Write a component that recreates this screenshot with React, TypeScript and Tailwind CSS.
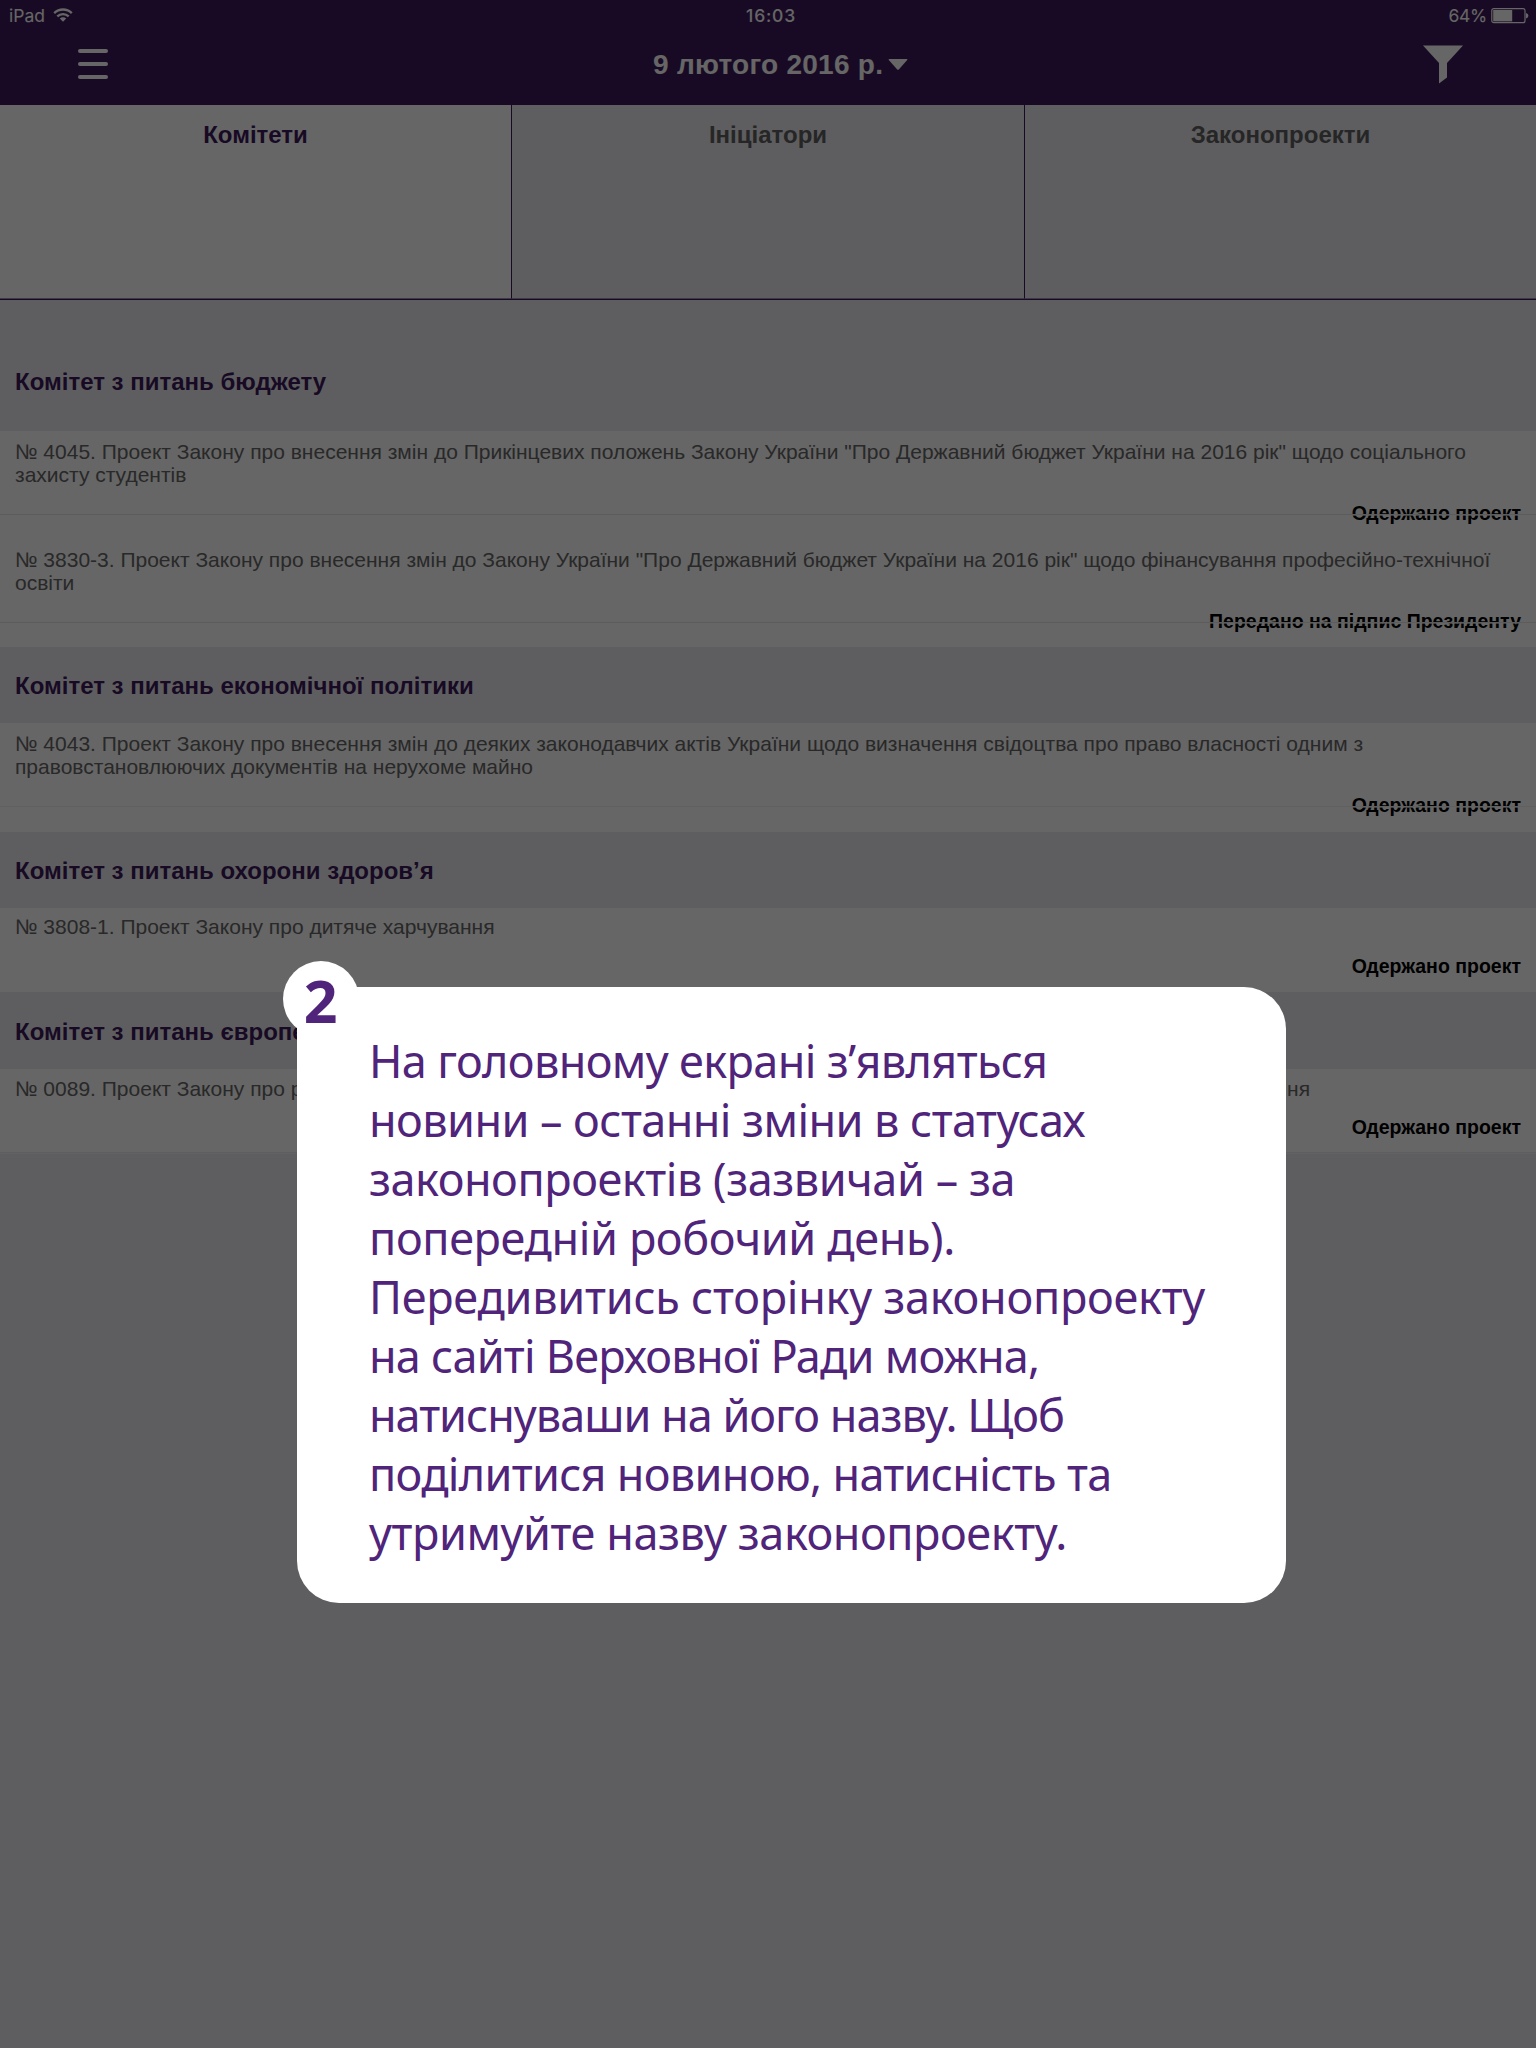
type Bill = {
  lines: string[];
  status: string;
  box: string;
  gap: string;
  divider?: string;
};

type Committee = { name: string; box: string; bills: Bill[] };

const committees: Committee[] = [
  {
    name: "Комітет з питань бюджету",
    box: "h-[131px] pt-[68px]",
    bills: [
      {
        lines: [
          '№ 4045. Проект Закону про внесення змін до Прикінцевих положень Закону України "Про Державний бюджет України на 2016 рік" щодо соціального',
          "захисту студентів",
        ],
        status: "Одержано проект",
        box: "h-[108px] pt-[9px]",
        gap: "mt-4",
        divider: "bg-[#e6e6e8]",
      },
      {
        lines: [
          '№ 3830-3. Проект Закону про внесення змін до Закону України "Про Державний бюджет України на 2016 рік" щодо фінансування професійно-технічної',
          "освіти",
        ],
        status: "Передано на підпис Президенту",
        box: "h-[108px] pt-[9px]",
        gap: "mt-4",
        divider: "bg-[#e6e6e8]",
      },
    ],
  },
  {
    name: "Комітет з питань економічної політики",
    box: "h-[76px] pt-[25px]",
    bills: [
      {
        lines: [
          "№ 4043. Проект Закону про внесення змін до деяких законодавчих актів України щодо визначення свідоцтва про право власності одним з",
          "правовстановлюючих документів на нерухоме майно",
        ],
        status: "Одержано проект",
        box: "h-[109px] pt-[9px]",
        gap: "mt-4",
        divider: "bg-[#efeff1]",
      },
    ],
  },
  {
    name: "Комітет з питань охорони здоров’я",
    box: "h-[76px] pt-[25px]",
    bills: [
      {
        lines: ["№ 3808-1. Проект Закону про дитяче харчування"],
        status: "Одержано проект",
        box: "h-[84px] pt-[7px]",
        gap: "mt-[17px]",
      },
    ],
  },
  {
    name: "Комітет з питань європейської інтеграції",
    box: "h-[77px] pt-[26px]",
    bills: [
      {
        lines: ["№ 0089. Проект Закону про ратифікацію", "фінансування"],
        status: "Одержано проект",
        box: "h-[83px] pt-2",
        gap: "mt-4",
      },
    ],
  },
];

const hint = [
  { text: "На головному екрані з’являться", tracking: "tracking-[-0.62px]" },
  { text: "новини – останні зміни в статусах", tracking: "tracking-[-0.56px]" },
  { text: "законопроектів (зазвичай – за", tracking: "tracking-[-0.44px]" },
  { text: "попередній робочий день).", tracking: "tracking-[-0.37px]" },
  { text: "Передивитись сторінку законопроекту", tracking: "tracking-[-0.25px]" },
  { text: "на сайті Верховної Ради можна,", tracking: "tracking-[-0.77px]" },
  { text: "натиснуваши на його назву. Щоб", tracking: "tracking-[-1px]" },
  { text: "поділитися новиною, натисність та", tracking: "tracking-[-0.67px]" },
  { text: "утримуйте назву законопроекту.", tracking: "tracking-[-0.43px]" },
];

function StatusBar() {
  return (
    <div className="grid h-8 grid-cols-3 items-start pt-[5px] font-[Inter] text-[17.5px] leading-[21px]">
      <div className="flex pl-[9px]">
        <span>iPad</span>
        <svg className="mt-[2px] ml-2" width="20" height="16" viewBox="0 0 20 16" fill="none" stroke="currentColor" strokeWidth="2.3">
          <path d="M1.2 6.1a12.6 12.6 0 0 1 17.6 0" />
          <path d="M4.3 9.4a8.1 8.1 0 0 1 11.4 0" />
          <path d="M10 14.8l-3.2-3.2a4.6 4.6 0 0 1 6.4 0z" fill="currentColor" stroke="none" />
        </svg>
      </div>
      <div className="pl-1.5 text-center font-medium tracking-[0.8px]">16:03</div>
      <div className="flex justify-end pr-[7px]">
        <span className="tracking-[-0.3px]">64%</span>
        <svg className="mt-[2px] ml-1" width="38" height="17" viewBox="0 0 38 17">
          <rect x="0.8" y="1.7" width="33.2" height="14" rx="2" fill="none" stroke="currentColor" strokeWidth="1.2" />
          <rect x="2.2" y="3" width="19" height="11.4" fill="currentColor" />
          <path d="M35 6q2.4.6 2.4 2.7T35 11.4z" fill="currentColor" />
        </svg>
      </div>
    </div>
  );
}

function Header() {
  return (
    <header className="h-[105px] bg-[#3e1b5a] text-white">
      <StatusBar />
      <div className="grid grid-cols-3">
        <div className="pt-[17px] pl-[78px]">
          <div className="flex w-[30px] flex-col gap-[9px]">
            <span className="h-1 rounded-full bg-white" />
            <span className="h-1 rounded-full bg-white" />
            <span className="h-1 rounded-full bg-white" />
          </div>
        </div>
        <div className="flex pt-[17px] pl-[141px]">
          <span className="text-[28px] leading-[32px] font-bold tracking-[0.27px] whitespace-nowrap">9 лютого 2016 р.</span>
          <svg className="mt-[9px] ml-[4.5px]" width="20" height="13" viewBox="0 0 20 13" fill="currentColor">
            <path d="M1.2 1h17.6q1 0 .4.9L11 11.3q-1 1-2 0L.8 1.9Q.2 1 1.2 1z" />
          </svg>
        </div>
        <div className="flex justify-end pt-[13px] pr-[73px]">
          <svg width="40" height="39" viewBox="0 0 40 39" fill="currentColor">
            <path d="M0 .5h40L24 18v14.500L16 38.500V18z" />
          </svg>
        </div>
      </div>
    </header>
  );
}

function Tabs() {
  return (
    <nav className="grid h-[195px] grid-cols-3 border-b border-[#3e1b5a] text-center text-2xl leading-[27px] font-bold text-[#606060]">
      <div className="border-r border-b border-r-[#3e1b5a] border-b-[#9f8dae] bg-white pt-4 text-[#3e1b5a]">Комітети</div>
      <div className="border-b border-[#9f8dae] pt-4">Ініціатори</div>
      <div className="border-b border-l border-b-[#9f8dae] border-l-[#3e1b5a] pt-4">Законопроекти</div>
    </nav>
  );
}

function BillRow({ bill, spread }: { bill: Bill; spread?: boolean }) {
  return (
    <div className={`relative bg-white px-[15px] ${bill.box}`}>
      <div
        className={
          spread
            ? "flex w-[1295px] justify-between text-[21px] leading-[23px] whitespace-nowrap text-[#666]"
            : "text-[21px] leading-[23px] whitespace-nowrap text-[#666]"
        }
      >
        {bill.lines.map((line) => (
          <div key={line}>{line}</div>
        ))}
      </div>
      <div className={`text-right text-[19.5px] leading-[23px] font-bold text-black ${bill.gap}`}>{bill.status}</div>
      {bill.divider && (
        <div className="absolute top-[83px] left-0 w-full">
          <div className={`h-px ${bill.divider}`} />
          <div className="h-px bg-white/60" />
        </div>
      )}
    </div>
  );
}

export default function App() {
  return (
    <div className="relative h-[2048px] w-[1536px] overflow-hidden bg-[#ebebf0] font-['Liberation_Sans',sans-serif]">
      <Header />
      <Tabs />
      <main>
        {committees.map((c, i) => (
          <section key={c.name}>
            <h2 className={`px-[15px] text-2xl leading-[27px] font-bold text-[#3e1b5a] ${c.box}`}>{c.name}</h2>
            {c.bills.map((b) => (
              <BillRow key={b.lines[0]} bill={b} spread={i === committees.length - 1} />
            ))}
          </section>
        ))}
        <div className="mt-px h-px bg-[#f4f4f6]" />
      </main>

      <div className="absolute inset-0 bg-black/60" />

      <div className="absolute top-[986.5px] left-[297.4px] h-[616px] w-[989px] rounded-[42px] bg-white pt-[44.5px] pl-[71.6px] font-['Noto_Sans',sans-serif] text-[#50247a]">
        <div className="absolute top-[-25.5px] left-[-14.4px] flex size-[76px] items-center justify-center rounded-full bg-white text-[59px] leading-none font-bold">
          <span className="pt-[3px] pr-px">2</span>
        </div>
        <div className="relative text-[45px] leading-[59px] whitespace-nowrap">
          {hint.map((l) => (
            <div key={l.text} className={l.tracking}>
              {l.text}
            </div>
          ))}
        </div>
      </div>
    </div>
  );
}
